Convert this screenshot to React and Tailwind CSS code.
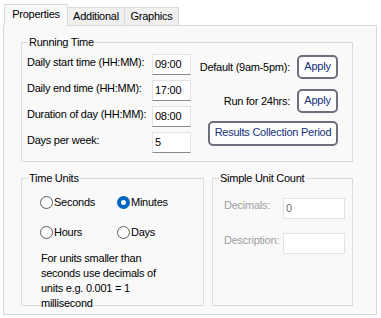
export default function App() {
  const rows = [
    ["Daily start time (HH:MM):", "09:00"],
    ["Daily end time (HH:MM):", "17:00"],
    ["Duration of day (HH:MM):", "08:00"],
    ["Days per week:", "5"],
  ];
  const Radio = ({ checked, label }) => (
    <div className="flex items-center h-[13px]">
      {checked ? (
        <span className="w-[13px] h-[13px] rounded-full bg-[#0067c0] flex items-center justify-center shrink-0">
          <span className="w-[5px] h-[5px] rounded-full bg-white" />
        </span>
      ) : (
        <span className="w-[13px] h-[13px] rounded-full border border-[#5d5d5d] bg-[#fbfbfb] shrink-0" />
      )}
      <span className="ml-[1px] whitespace-nowrap">{label}</span>
    </div>
  );
  const btn =
    "h-[24px] border-2 border-[#6e6e7c] rounded-[5px] bg-[#fdfdfd] text-[#14307a] flex items-center justify-center pb-[2px]";
  return (
    <div className="w-[381px] h-[318px] bg-white pl-[3px] pt-[4px] text-[11px] leading-[13px] text-black tracking-[-0.25px] font-['Liberation_Sans',Arial,sans-serif]">
      <div className="flex items-start h-[21px] pl-[1px]">
        <div className="relative z-10 w-[64px] h-[22px] border border-b-0 border-[#d9d9d9] bg-[#f9f9f9] text-center pt-[3px]">
          Properties
        </div>
        <div className="mt-[3px] w-[57px] h-[18px] border-t border-r border-[#d9d9d9] bg-[#f0f0f0] text-center pt-[2px]">
          Additional
        </div>
        <div className="mt-[3px] w-[54px] h-[18px] border-t border-r border-[#d9d9d9] bg-[#f0f0f0] text-center pt-[2px]">
          Graphics
        </div>
      </div>
      <div className="w-[374px] h-[290px] border border-[#d9d9d9] bg-[#f9f9f9] pt-[10px]">
        <fieldset className="border border-[#dcdcdc] ml-[17px] w-[332px] pb-[8px]">
          <legend className="ml-[6px] px-[1px]">Running Time</legend>
          <div className="flex justify-between pl-[5px] pr-[14px] pt-[5px]">
            <div className="flex flex-col gap-[5px] w-[164px]">
              {rows.map(([l, v]) => (
                <div key={l} className="flex items-start h-[21px]">
                  <span className="w-[125px] pt-[2px] whitespace-nowrap">{l}</span>
                  <div className="w-[39px] h-[21px] bg-white border border-[#e3e3e3] border-b-[#8a8a8a] flex items-center pl-[2px]">
                    {v}
                  </div>
                </div>
              ))}
            </div>
            <div className="flex flex-col items-end pt-[1px]">
              <div className="flex items-center gap-[7px]">
                <span className="whitespace-nowrap">Default (9am-5pm):</span>
                <div className={btn + " w-[41px]"}>Apply</div>
              </div>
              <div className="flex items-center gap-[7px] mt-[10px]">
                <span className="whitespace-nowrap">Run for 24hrs:</span>
                <div className={btn + " w-[41px]"}>Apply</div>
              </div>
              <div className="mt-[8px] w-[130px] h-[25px] border-2 border-[#6e6e7c] rounded-[5px] bg-[#fdfdfd] text-[#14307a] flex items-center justify-center pb-[2px] whitespace-nowrap">
                Results Collection Period
              </div>
            </div>
          </div>
        </fieldset>
        <div className="flex gap-[8px] ml-[17px] mt-[10px]">
          <fieldset className="border border-[#dcdcdc] w-[183px] h-[134px]">
            <legend className="ml-[6px] px-[1px]">Time Units</legend>
            <div className="pt-[11px] pl-[18px]">
              <div className="grid grid-cols-[77px_auto] gap-y-[17px]">
                <Radio label="Seconds" />
                <Radio label="Minutes" checked />
                <Radio label="Hours" />
                <Radio label="Days" />
              </div>
              <p className="mt-[12px] pl-[1px] w-[139px] leading-[15px]">
                For units smaller than seconds use decimals of units e.g. 0.001 = 1 millisecond
              </p>
            </div>
          </fieldset>
          <fieldset className="border border-[#dcdcdc] w-[141px] h-[134px]">
            <legend className="ml-[6px] px-[1px]">Simple Unit Count</legend>
            <div className="pt-[13px] pl-[11px] flex flex-col gap-[14px]">
              <div className="flex items-start">
                <span className="w-[59px] pt-[1px] text-[#a0a0a0] whitespace-nowrap">Decimals:</span>
                <div className="w-[62px] h-[21px] bg-white border border-[#e3e3e3] flex items-center pl-[2px] text-[#6d6d6d]">
                  0
                </div>
              </div>
              <div className="flex items-start">
                <span className="w-[59px] pt-[1px] text-[#a0a0a0] whitespace-nowrap">Description:</span>
                <div className="w-[62px] h-[21px] bg-white border border-[#e3e3e3]" />
              </div>
            </div>
          </fieldset>
        </div>
      </div>
    </div>
  );
}
